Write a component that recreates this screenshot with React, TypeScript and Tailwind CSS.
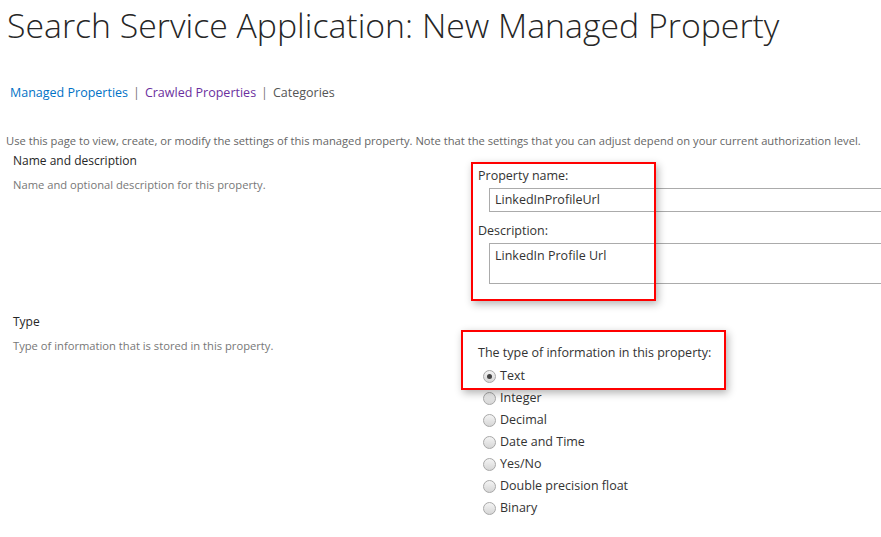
import { ReactNode } from "react"

const types = ["Text", "Integer", "Decimal", "Date and Time", "Yes/No", "Double precision float", "Binary"]

function Radio({ checked }: { checked?: boolean }) {
  return (
    <span className="w-[13px] h-[13px] rounded-full border border-[#a8a8a8] bg-gradient-to-b from-[#f4f4f4] to-[#d6d6d6] flex items-center justify-center shrink-0">
      {checked && <span className="w-[5px] h-[5px] rounded-full bg-[#444]" />}
    </span>
  )
}

function Section({ title, desc, children }: { title: string; desc: string; children: ReactNode }) {
  return (
    <div className="grid grid-cols-[461px_1fr]">
      <div className="pl-[13px]">
        <div className="text-[12px] text-[#262626] leading-[20px]">{title}</div>
        <div className="text-[11.2px] text-[#777] leading-[16px] mt-[6px]">{desc}</div>
      </div>
      <div className="relative">{children}</div>
    </div>
  )
}

export default function App() {
  return (
    <div className="w-[881px] h-[537px] bg-white overflow-hidden font-['Open_Sans','Noto_Sans',sans-serif]">
      <h1 className="pl-[7px] pt-[3px] text-[33.8px] font-light leading-[44px] text-[#262626]">
        Search Service Application: New Managed Property
      </h1>
      <div className="pl-[10px] mt-[37px] text-[12.5px] leading-[18px] flex gap-[5px] text-[#777]">
        <span className="text-[#0072c6]">Managed Properties</span>
        <span>|</span>
        <span className="text-[#6b2f9e]">Crawled Properties</span>
        <span>|</span>
        <span className="text-[#555]">Categories</span>
      </div>
      <p className="pl-[6px] mt-[31px] text-[11.2px] leading-[16px] text-[#666] whitespace-nowrap">
        Use this page to view, create, or modify the settings of this managed property. Note that the settings that you can adjust depend on your current authorization level.
      </p>

      <div className="mt-[2px]">
        <Section title="Name and description" desc="Name and optional description for this property.">
          <div className="pt-[16px] pl-[17px] text-[12.5px] text-[#333]">
            <div className="leading-[18px]">Property name:</div>
            <div className="ml-[11px] mt-[3px] h-[24px] border border-[#ababab] border-r-0 pl-[5px] flex items-center text-[12.5px] text-[#333]">
              LinkedInProfileUrl
            </div>
            <div className="leading-[18px] mt-[10px]">Description:</div>
            <div className="ml-[11px] mt-[3px] h-[41px] border border-[#ababab] border-r-0 pl-[5px] pt-[3px] text-[12.5px] text-[#333] leading-[18px]">
              LinkedIn Profile Url
            </div>
          </div>
          <div className="absolute left-[10px] top-[11px] w-[185px] h-[139px] border-2 border-[#ff0000] shadow-[2px_3px_8px_rgba(0,0,0,0.3)]" />
        </Section>
      </div>

      <div className="mt-[28px]">
        <Section title="Type" desc="Type of information that is stored in this property.">
          <div className="pt-[32px] pl-[17px] text-[12.5px] text-[#333]">
            <div className="leading-[18px]">The type of information in this property:</div>
            <div className="mt-[3px] flex flex-col">
              {types.map((t, i) => (
                <label key={t} className="flex items-center gap-[4px] h-[22px] pl-[5px]">
                  <Radio checked={i === 0} />
                  <span>{t}</span>
                </label>
              ))}
            </div>
          </div>
          <div className="absolute left-0 top-[18px] w-[265px] h-[60px] border-2 border-[#ff0000] shadow-[2px_3px_8px_rgba(0,0,0,0.3)]" />
        </Section>
      </div>
    </div>
  )
}
